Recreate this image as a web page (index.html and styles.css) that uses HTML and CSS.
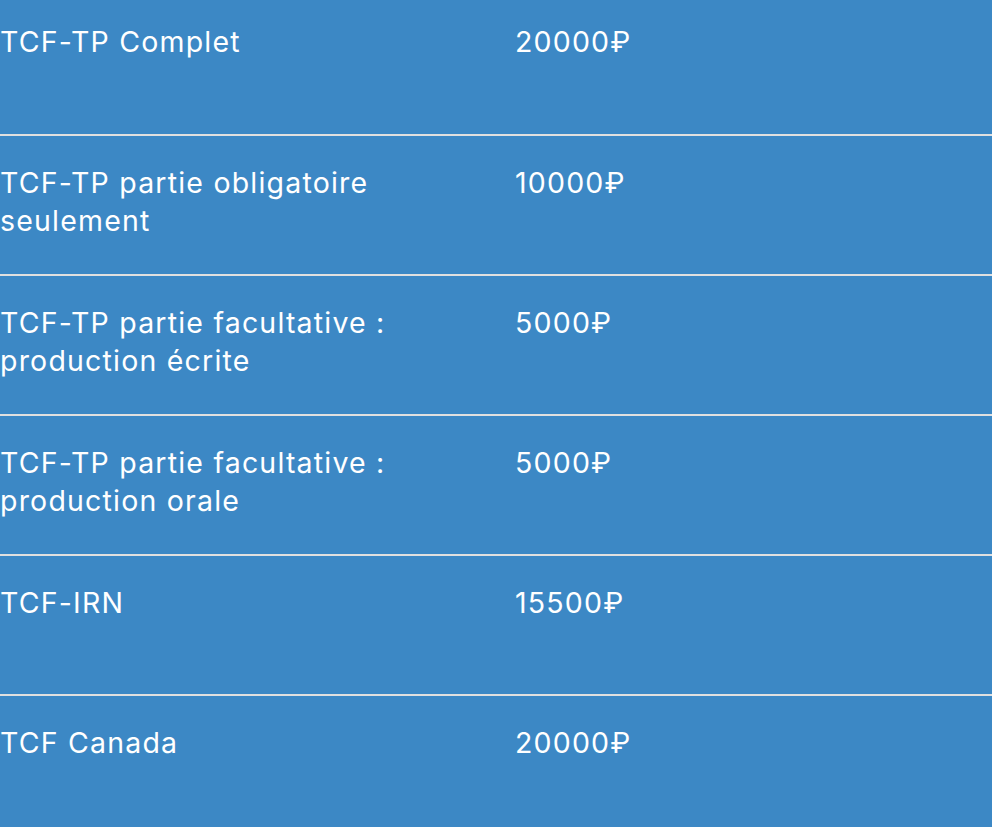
FILE: index.html
```html
<!DOCTYPE html>
<html lang="fr">
<head>
<meta charset="utf-8">
<title>Tarifs TCF</title>
<link rel="stylesheet" href="styles.css">
</head>
<body>
<div class="prices">
  <div class="row first">
    <div class="name">TCF-TP Complet</div>
    <div class="price">20000₽</div>
  </div>
  <div class="row">
    <div class="name">TCF-TP partie obligatoire seulement</div>
    <div class="price">10000₽</div>
  </div>
  <div class="row">
    <div class="name">TCF-TP partie facultative : production écrite</div>
    <div class="price">5000₽</div>
  </div>
  <div class="row">
    <div class="name">TCF-TP partie facultative : production orale</div>
    <div class="price">5000₽</div>
  </div>
  <div class="row">
    <div class="name">TCF-IRN</div>
    <div class="price">15500₽</div>
  </div>
  <div class="row">
    <div class="name">TCF Canada</div>
    <div class="price">20000₽</div>
  </div>
</div>
</body>
</html>
```

FILE: styles.css
```css
html, body {
  margin: 0;
  padding: 0;
  background: #3c88c5;
}
body {
  font-family: "Inter", "DejaVu Sans", sans-serif;
  color: #ffffff;
  overflow: hidden;
}
.prices {
  display: flex;
  flex-direction: column;
}
.row {
  display: grid;
  grid-template-columns: 515px 1fr;
  box-sizing: border-box;
  height: 140px;
  padding-top: 28px;
  border-top: 2px solid #e0e0e0;
  font-size: 28.5px;
  font-weight: 400;
  line-height: 38px;
  letter-spacing: 1.2px;
}
.row.first {
  height: 134px;
  border-top: none;
  padding-top: 23px;
}
.name {
  padding-right: 110px;
}
```
